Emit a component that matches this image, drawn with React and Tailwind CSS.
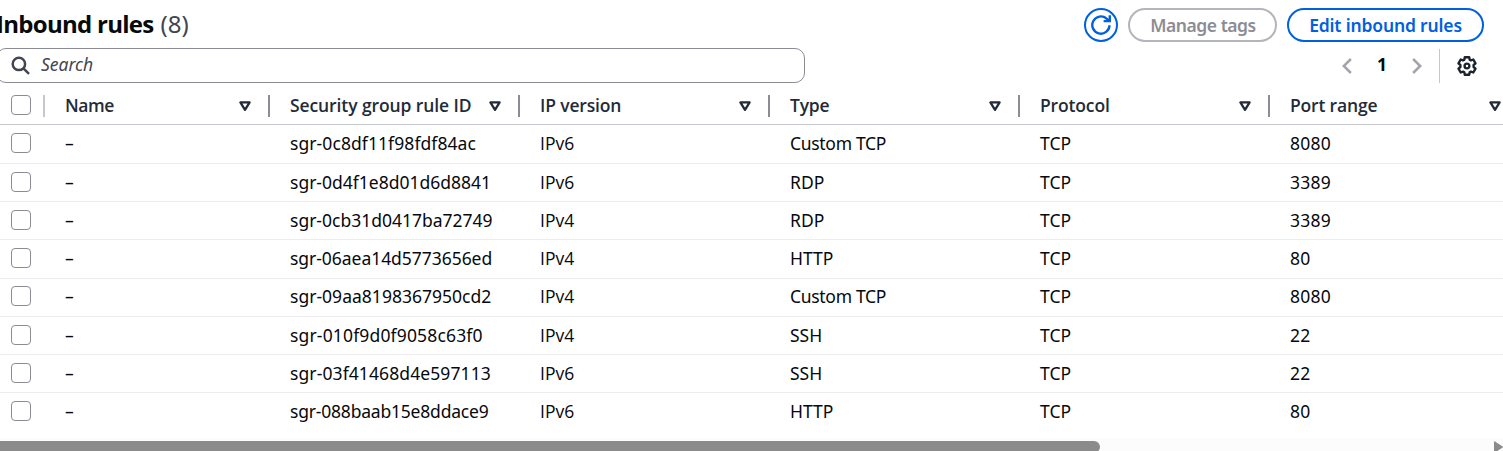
import React from 'react';

const columns = [
  { label: 'Name', cls: 'tracking-[-0.4px]' },
  { label: 'Security group rule ID', cls: 'tracking-[-0.1px]' },
  { label: 'IP version', cls: 'tracking-[-0.15px]' },
  { label: 'Type', cls: 'tracking-[-0.2px]' },
  { label: 'Protocol', cls: 'tracking-[-0.15px]' },
  { label: 'Port range', cls: 'tracking-[-0.17px]' },
];

const rows = [
  ['sgr-0c8df11f98fdf84ac', 'IPv6', 'Custom TCP', '8080', 'h-[39px]', 'tracking-[0.08px]'],
  ['sgr-0d4f1e8d01d6d8841', 'IPv6', 'RDP', '3389', 'h-[38px]', ''],
  ['sgr-0cb31d0417ba72749', 'IPv4', 'RDP', '3389', 'h-[38px]', ''],
  ['sgr-06aea14d5773656ed', 'IPv4', 'HTTP', '80', 'h-[39px]', 'tracking-[-0.04px]'],
  ['sgr-09aa8198367950cd2', 'IPv4', 'Custom TCP', '8080', 'h-[38px]', 'tracking-[0.02px]'],
  ['sgr-010f9d0f9058c63f0', 'IPv4', 'SSH', '22', 'h-[38px]', 'tracking-[0.16px]'],
  ['sgr-03f41468d4e597113', 'IPv6', 'SSH', '22', 'h-[38px]', 'tracking-[0.1px]'],
  ['sgr-088baab15e8ddace9', 'IPv6', 'HTTP', '80', 'h-[38px]', 'tracking-[-0.2px]'],
];

const Checkbox = () => (
  <span className="ml-[11px] block size-5 shrink-0 rounded-[4px] border-[1.5px] border-[#8c8c94] bg-white" />
);

const SortIcon = () => (
  <svg className="mt-[2px] h-[11px] w-3" viewBox="0 0 12 11" fill="none" stroke="#232b37" strokeWidth="2.3" strokeLinejoin="round">
    <path d="M1.4 1.4h9.2L6 8.8z" />
  </svg>
);

export default function App() {
  return (
    <div className="flex h-[451px] w-full flex-col overflow-hidden bg-white font-['Noto_Sans',sans-serif] text-[17.5px] text-[#06090d]">
      <div className="flex h-12 shrink-0 items-start pt-2 pr-[19px]">
        <h2 className="-ml-[4px] flex h-[32px] items-center whitespace-pre text-[24px]">
          <span className="font-['Open_Sans',sans-serif] font-bold tracking-[-0.72px]">Inbound rules</span>
          <span className="ml-[7px] text-[24px] text-[#424650]">(8)</span>
        </h2>
        <div className="ml-auto flex gap-[10px] font-semibold">
          <button className="flex size-[34px] items-center justify-center rounded-full border-2 border-[#0060e0]">
            <svg className="size-5" viewBox="0 0 20 20" fill="none" stroke="#0060e0" strokeWidth="2.4">
              <path d="M18.5 10.2A8.6 8.6 0 1 1 15.6 3.6L18 5.4" />
              <path d="M18.8 0.2v5.9H12.6" />
            </svg>
          </button>
          <button className="flex h-[34px] w-[149px] items-center justify-center rounded-full border-2 border-[#b4b4bb] pl-px tracking-[-0.45px] text-[#8c8c94]">
            Manage tags
          </button>
          <button className="flex h-[34px] w-[197px] items-center justify-center rounded-full border-2 border-[#0060e0] tracking-[-0.16px] text-[#0060e0]">
            Edit inbound rules
          </button>
        </div>
      </div>

      <div className="flex h-[39px] shrink-0 items-start">
        <div className="-ml-[4px] flex h-[35px] w-[809px] items-center rounded-[10px] border border-[#8c8c94]">
          <svg className="ml-[14px] size-5" viewBox="0 0 20 20" fill="none" stroke="#424650" strokeWidth="2.5">
            <circle cx="7.9" cy="7.9" r="6.2" />
            <path d="M12.4 12.4L18 17.8" />
          </svg>
          <span className="-mt-[2px] ml-[10px] italic text-[#424650]">Search</span>
        </div>
        <div className="ml-auto flex h-[35px] items-center pr-[26px]">
          <svg className="h-4 w-[10px]" viewBox="0 0 10 16" fill="none" stroke="#a4a4ad" strokeWidth="2.5">
            <path d="M8.9 1L1.8 8l7.1 7" />
          </svg>
          <span className="-mt-[2px] w-[60px] text-center font-bold">1</span>
          <svg className="h-4 w-[10px]" viewBox="0 0 10 16" fill="none" stroke="#a4a4ad" strokeWidth="2.5">
            <path d="M1.1 1l7.1 7-7.1 7" />
          </svg>
          <span className="ml-[17px] h-[34px] w-px bg-[#c6c6cd]" />
          <svg className="ml-[17px] size-5" viewBox="0 0 20 20" fill="none" stroke="#1b232d" strokeWidth="2.4" strokeLinejoin="round">
            <path d="M7.8 1.2h4.4l.5 2.5 1.2.7 2.4-.9 2.2 3.8-1.9 1.7v2l1.9 1.7-2.2 3.8-2.4-.9-1.2.7-.5 2.5H7.8l-.5-2.5-1.2-.7-2.4.9-2.2-3.8L3.4 11V9L1.5 7.3l2.2-3.8 2.4.9 1.2-.7z" />
            <circle cx="10" cy="10" r="2.4" />
          </svg>
        </div>
      </div>

      <div className="flex h-[38px] w-[1520px] shrink-0 items-center border-b border-[#c6c6cd] text-[#232b37]">
        <div className="flex w-[45px] items-center">
          <span className="-mt-[2px]"><Checkbox /></span>
          <span className="ml-auto h-[22px] w-[2px] bg-[#c6c6cd]" />
        </div>
        {columns.map((c, i) => (
          <div
            key={c.label}
            className={`flex shrink-0 items-center whitespace-nowrap pl-5 font-['Open_Sans',sans-serif] font-semibold ${i === 0 ? 'w-[225px]' : 'w-[250px]'}`}
          >
            <span className={c.cls}>{c.label}</span>
            <span className="ml-auto flex items-center gap-[17px]">
              <SortIcon />
              <span className="h-[22px] w-[2px] bg-[#8c8c94]" />
            </span>
          </div>
        ))}
      </div>

      {rows.map(([id, ip, type, port, h, track], i) => (
        <div
          key={id}
          className={`flex w-[1520px] shrink-0 items-start border-b leading-[20px] ${h} ${i === 4 ? 'pt-[7px]' : 'pt-2'} ${i === 7 ? 'border-transparent' : 'border-[#ebebf0]'}`}
        >
          <div className="w-[65px]"><Checkbox /></div>
          <div className="w-[225px]">–</div>
          <div className={`w-[250px] whitespace-nowrap ${track}`}>{id}</div>
          <div className="w-[250px] font-['Open_Sans',sans-serif]">{ip}</div>
          <div className={type === 'Custom TCP' ? 'w-[250px] tracking-[-0.3px]' : 'w-[250px]'}>{type}</div>
          <div className="w-[250px]">TCP</div>
          <div className="tracking-[0.25px]">{port}</div>
        </div>
      ))}

      <div className="mt-[7px] flex h-[13px] shrink-0 items-start overflow-hidden bg-[#fcfcfc] pt-[3px]">
        <div className="h-[12px] w-[1100px] shrink-0 rounded-r-full bg-[#8b8b8b]" />
        <svg className="ml-auto h-[12px] w-[9px] shrink-0" viewBox="0 0 9 12" fill="#8b8b8b">
          <path d="M0 1Q0 0 1 .4L8.6 5.4Q9.3 6 8.6 6.6L1 11.6Q0 12 0 11z" />
        </svg>
      </div>
    </div>
  );
}
